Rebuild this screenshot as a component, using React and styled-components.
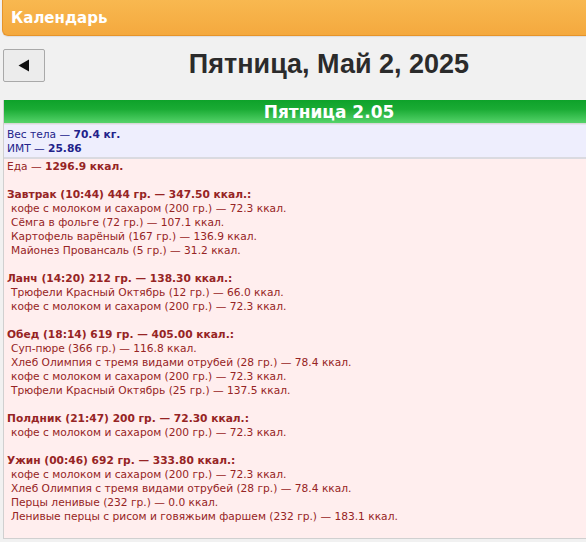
import React from 'react';
import styled, { createGlobalStyle } from 'styled-components';

const GlobalStyle = createGlobalStyle`
  html, body {
    margin: 0;
    padding: 0;
    background: #f1f1f1;
  }
`;

const meals = [
  {
    title: 'Завтрак (10:44) 444 гр. — 347.50 ккал.:',
    items: [
      'кофе с молоком и сахаром (200 гр.) — 72.3 ккал.',
      'Сёмга в фольге (72 гр.) — 107.1 ккал.',
      'Картофель варёный (167 гр.) — 136.9 ккал.',
      'Майонез Провансаль (5 гр.) — 31.2 ккал.',
    ],
  },
  {
    title: 'Ланч (14:20) 212 гр. — 138.30 ккал.:',
    items: [
      'Трюфели Красный Октябрь (12 гр.) — 66.0 ккал.',
      'кофе с молоком и сахаром (200 гр.) — 72.3 ккал.',
    ],
  },
  {
    title: 'Обед (18:14) 619 гр. — 405.00 ккал.:',
    items: [
      'Суп-пюре (366 гр.) — 116.8 ккал.',
      'Хлеб Олимпия с тремя видами отрубей (28 гр.) — 78.4 ккал.',
      'кофе с молоком и сахаром (200 гр.) — 72.3 ккал.',
      'Трюфели Красный Октябрь (25 гр.) — 137.5 ккал.',
    ],
  },
  {
    title: 'Полдник (21:47) 200 гр. — 72.30 ккал.:',
    items: ['кофе с молоком и сахаром (200 гр.) — 72.3 ккал.'],
  },
  {
    title: 'Ужин (00:46) 692 гр. — 333.80 ккал.:',
    items: [
      'кофе с молоком и сахаром (200 гр.) — 72.3 ккал.',
      'Хлеб Олимпия с тремя видами отрубей (28 гр.) — 78.4 ккал.',
      'Перцы ленивые (232 гр.) — 0.0 ккал.',
      'Ленивые перцы с рисом и говяжьим фаршем (232 гр.) — 183.1 ккал.',
    ],
  },
];

export default function App() {
  return (
    <>
      <GlobalStyle />
      <Page>
        <TopBar>Календарь</TopBar>
        <DateRow>
          <BackButton type="button" aria-label="Назад">
            <svg width="12" height="13" viewBox="0 0 12 13">
              <path d="M11 0.5 L11 12.5 L0.5 6.5 Z" fill="#111" />
            </svg>
          </BackButton>
          <DateTitle>Пятница, Май 2, 2025</DateTitle>
        </DateRow>
        <DayCard>
          <DayHeader>Пятница 2.05</DayHeader>
          <BodyBlock>
            <Line>
              Вес тела — <b>70.4 кг.</b>
            </Line>
            <Line>
              ИМТ — <b>25.86</b>
            </Line>
          </BodyBlock>
          <FoodBlock>
            <Line>
              Еда — <b>1296.9 ккал.</b>
            </Line>
            {meals.map(meal => (
              <Meal key={meal.title}>
                <Line>
                  <b>{meal.title}</b>
                </Line>
                {meal.items.map((item, i) => (
                  <Item key={i}>{item}</Item>
                ))}
              </Meal>
            ))}
            <Spacer />
          </FoodBlock>
        </DayCard>
      </Page>
    </>
  );
}

const Page = styled.div`
  width: 586px;
  overflow: hidden;
  font-family: 'DejaVu Sans', Verdana, sans-serif;
`;

const TopBar = styled.div`
  margin-left: 2px;
  height: 35px;
  padding-left: 8px;
  display: flex;
  align-items: center;
  background: linear-gradient(#f8b850, #f4a93e);
  border-left: 1px solid #e6942a;
  border-bottom: 1px solid #e6942a;
  border-radius: 0 0 0 6px;
  color: #fff;
  font-size: 15px;
  font-weight: bold;
  box-shadow: 0 1px 1px rgba(0, 0, 0, 0.08);
`;

const DateRow = styled.div`
  display: flex;
  align-items: center;
  padding: 13px 0 0 3px;
`;

const BackButton = styled.button`
  flex: none;
  width: 42px;
  height: 33px;
  padding: 0;
  display: flex;
  align-items: center;
  justify-content: center;
  background: #ececec;
  border: 1px solid #a9a9a9;
  border-radius: 2px;
`;

const DateTitle = styled.h1`
  flex: 1;
  margin: 0 0 2px;
  padding-left: 27px;
  text-align: center;
  white-space: nowrap;
  font-family: 'Liberation Sans', Arial, sans-serif;
  font-size: 27px;
  font-weight: bold;
  color: #2b2b2b;
`;

const DayCard = styled.div`
  margin: 18px 0 0 3px;
  border-left: 1px solid #d0d0d0;
  border-bottom: 1px solid #d0d0d0;
`;

const DayHeader = styled.div`
  height: 23px;
  padding-left: 68px;
  display: flex;
  align-items: center;
  justify-content: center;
  background: linear-gradient(#0ea22a, #1aab34 40%, #55d36a);
  color: #fff;
  font-size: 17px;
  font-weight: bold;
  border-bottom: 1px solid #d8d8d8;
`;

const BodyBlock = styled.div`
  background: #eeeefd;
  color: #22228a;
  padding: 3px 3px 1px;
  border-top: 1px solid #e4e4ee;
  border-bottom: 2px solid #dadae0;
`;

const FoodBlock = styled.div`
  background: #ffeeee;
  color: #962424;
  padding: 1px 3px 0;
`;

const Line = styled.div`
  font-size: 10.65px;
  line-height: 14px;
  white-space: nowrap;
`;

const Meal = styled.div`
  margin-top: 14px;
`;

const Item = styled(Line)`
  padding-left: 4px;
`;

const Spacer = styled.div`
  height: 14px;
`;
